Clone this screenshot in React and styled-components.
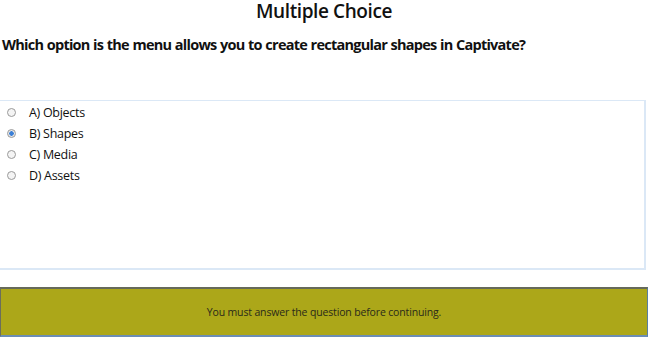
import React, { useState } from "react";
import styled, { createGlobalStyle } from "styled-components";

const GlobalStyle = createGlobalStyle`
  html, body {
    margin: 0;
    padding: 0;
    background: #ffffff;
    font-family: "Open Sans", "Liberation Sans", sans-serif;
  }
`;

const Page = styled.div`
  width: 648px;
  height: 337px;
  display: flex;
  flex-direction: column;
  overflow: hidden;
  color: #111;
`;

const Title = styled.h1`
  margin: 0;
  height: 22px;
  text-align: center;
  font-size: 19px;
  line-height: 22px;
  font-weight: 600;
  letter-spacing: -0.4px;
`;

const Question = styled.h2`
  margin: 13px 0 0 2px;
  font-size: 14.5px;
  line-height: 20px;
  font-weight: 700;
  letter-spacing: -0.75px;
  word-spacing: 0.5px;
`;

const OptionsBox = styled.div`
  margin-top: 45px;
  width: 646px;
  height: 170px;
  box-sizing: border-box;
  border: solid #dbe8f6;
  border-width: 1px 2px 2px 0;
  padding: 1px 0 0 7px;
  display: flex;
  flex-direction: column;
`;

const Option = styled.label`
  display: flex;
  align-items: center;
  height: 21px;
  font-size: 12.5px;
  letter-spacing: -0.3px;
  cursor: pointer;
`;

const Radio = styled.span`
  width: 7px;
  height: 7px;
  border-radius: 50%;
  border: 1px solid #9a9a9a;
  background: ${(p) => (p.$checked ? "radial-gradient(circle, #3b7fd6 0 2px, #e8e8e8 2.5px)" : "#f4f4f4")};
  margin-right: 13px;
  flex-shrink: 0;
`;

const Feedback = styled.div`
  margin-top: 17px;
  width: 648px;
  height: 50px;
  flex-shrink: 0;
  box-sizing: border-box;
  background: #aca719;
  border-top: 2px solid #666a5a;
  border-left: 1px solid #6b6e5c;
  border-right: 1px solid #5a7fa0;
  border-bottom: 2px solid #6b8db5;
  display: flex;
  align-items: center;
  justify-content: center;
  font-size: 10.5px;
  color: #2a2a1a;
  letter-spacing: -0.15px;
`;

const options = ["A) Objects", "B) Shapes", "C) Media", "D) Assets"];

export default function App() {
  const [selected, setSelected] = useState(1);
  return (
    <>
      <GlobalStyle />
      <Page>
        <Title>Multiple Choice</Title>
        <Question>Which option is the menu allows you to create rectangular shapes in Captivate?</Question>
        <OptionsBox>
          {options.map((o, i) => (
            <Option key={o} onClick={() => setSelected(i)}>
              <Radio $checked={selected === i} />
              {o}
            </Option>
          ))}
        </OptionsBox>
        <Feedback>You must answer the question before continuing.</Feedback>
      </Page>
    </>
  );
}
